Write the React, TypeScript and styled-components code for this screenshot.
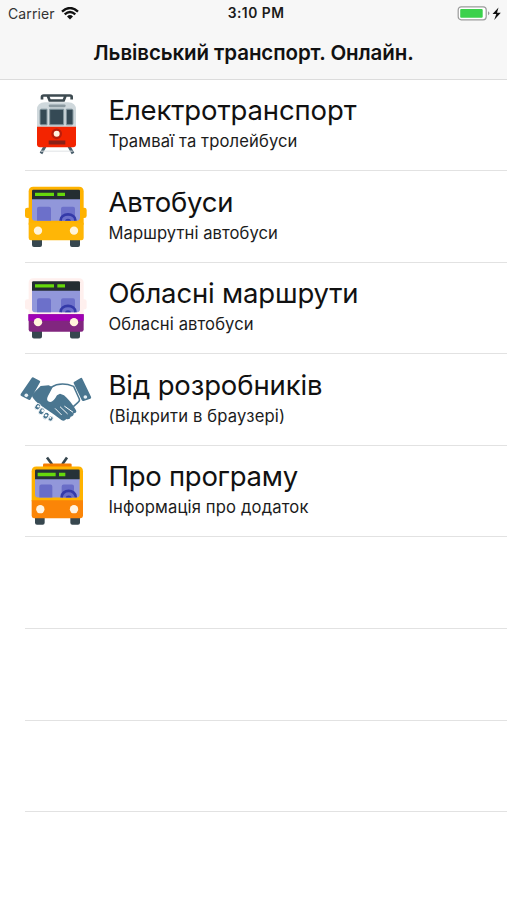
import React from "react";
import styled, { createGlobalStyle } from "styled-components";

const GlobalStyle = createGlobalStyle`
  * { box-sizing: border-box; }
  body { margin: 0; background: #fff; font-family: Inter, "Liberation Sans", sans-serif; color: #111; }
`;

const Screen = styled.main`
  width: 507px;
  height: 900px;
  overflow: hidden;
  background: #fff;
`;

const Header = styled.header`
  height: 79.5px;
  background: #f7f7f7;
  border-bottom: 1px solid #dcdcdc;
`;

const StatusBar = styled.div`
  display: grid;
  grid-template-columns: 1fr auto 1fr;
  align-items: center;
  height: 27px;
  padding: 0 5px 0 8px;
  font-size: 14px;
  line-height: 27px;
`;

const Carrier = styled.div`
  display: flex;
  align-items: center;
  gap: 6.5px;
  letter-spacing: 0.1px;
  color: #333;
`;

const Clock = styled.div`
  font-weight: 600;
  font-size: 13.8px;
  letter-spacing: 0.5px;
  color: #1a1a1a;
  padding-left: 2px;
`;

const Power = styled.div`
  display: flex;
  justify-content: flex-end;
  align-items: center;
`;

const Title = styled.h1`
  margin: 0;
  height: 51px;
  line-height: 51px;
  text-align: center;
  font-size: 20.5px;
  font-weight: 600;
  letter-spacing: -0.1px;
  white-space: nowrap;
`;

const List = styled.ul`
  margin: 0;
  padding: 0;
  list-style: none;
`;

const Row = styled.li`
  display: flex;
  height: 91.6px;
  margin-left: 25px;
  border-bottom: 1px solid #e2e2e2;
`;

const IconSlot = styled.div`
  flex: none;
  width: 84px;
  margin-left: -10px;
  margin-right: 9.5px;
  svg { display: block; overflow: visible; }
`;

const Labels = styled.div`
  padding-top: 12.6px;
  white-space: nowrap;
`;

const Name = styled.div<{ $tracking: number }>`
  font-size: 27.5px;
  line-height: 36px;
  letter-spacing: ${(p) => p.$tracking}px;
`;

const Detail = styled.div<{ $tracking: number }>`
  font-size: 16.6px;
  line-height: 26.6px;
  letter-spacing: ${(p) => p.$tracking}px;
  color: #1c1c1c;
`;

const Canvas = ({ shift, children }: { shift: number; children: React.ReactNode }) => (
  <svg width="90" height="90" viewBox={`0 ${-shift * 3} 270 270`} aria-hidden="true">
    {children}
  </svg>
);

const Tram = () => (
  <Canvas shift={5.5}>
    <path d="M81 42v-8q0-4 5-4h79q5 0 5 4v8M98 30l6 15h42l6-15" fill="none" stroke="#3d4a50" strokeWidth="8" />
    <path d="M91 181l-13 23M161 181l13 23" stroke="#4a5f6c" strokeWidth="9" />
    <path d="M78 197h95" stroke="#dfe3e5" strokeWidth="3" />
    <path d="M66 126V73q0-23 24-23h69q24 0 24 23v53z" fill="#cfd8dc" />
    <rect x="101" y="57" width="51" height="8" rx="4" fill="#8c9aa1" />
    <path d="M75 75q0-4 4-4h17v47H79q-4 0-4-4zM154 71h16q4 0 4 4v39q0 4-4 4h-16zM104 71h42v47h-42z" fill="#354a55" stroke="#8799a1" strokeWidth="3" />
    <path d="M66 124h117v52q0 9-9 9H75q-9 0-9-9z" fill="#f32400" />
    <circle cx="125" cy="145" r="16" fill="#ba1d0b" />
    <circle cx="125" cy="145" r="9" fill="#fff3e0" />
    <rect x="101" y="165" width="50" height="12" fill="#8a2118" />
  </Canvas>
);

interface BusColors { body: string; lower: string; mirror: string; stripe?: string; }

const BusShape = ({ body, lower, mirror, stripe }: BusColors) => (
  <>
    <path d="M51 190h30v20q0 6-6 6H57q-6 0-6-6zM165 190h30v20q0 6-6 6h-18q-6 0-6-6z" fill="#37474f" />
    <rect x="30" y="98" width="185" height="31" rx="7" fill={mirror} />
    <path d="M41 49q0-14 14-14h137q14 0 14 14v100H41z" fill={body} />
    <path d="M41 143h165v46q0 7-7 7H48q-7 0-7-7z" fill={lower} />
    {stripe && <path d="M40 143h166v20H40z" fill={stripe} />}
    <path d="M51 70h144v58q0 9-9 9H60q-9 0-9-9z" fill="#9197da" />
    <path d="M66 137v-36q0-6 6-6h30q6 0 6 6v36zM138 137v-36q0-6 6-6h30q6 0 6 6v36z" fill="#6c70ca" />
    <path d="M51 73V48q0-4 4-4h136q4 0 4 4v25z" fill="#242d31" />
    <path d="M60 53h57v10H60zM127 53h23v10h-23z" fill="#66d80b" />
    <path d="M137 137v-2a22 17 0 0 1 44 0v2" fill="none" stroke="#343aa9" strokeWidth="8" />
    <path d="M150 137q1-6 9-6t9 6z" fill="#343aa9" />
    <circle cx="69" cy="167" r="12.5" fill="#fff4db" />
    <circle cx="177" cy="167" r="12.5" fill="#fff4db" />
  </>
);

const CityBus = () => (
  <Canvas shift={4}><BusShape body="#ffb300" lower="#ffb606" mirror="#ffb300" /></Canvas>
);

const RegionalBus = () => (
  <Canvas shift={3.5}><BusShape body="#fff0ee" lower="#81267f" mirror="#fff0ee" stripe="#a000b5" /></Canvas>
);

const Handshake = () => (
  <Canvas shift={1}>
    <path d="M54 67l20 10q3 2 1 5l-28 50q-2 4-6 2l-22-11q-4-2-2-6l33-48q2-3 4-2zM177 81l20-12q3-2 5 2l26 54q2 4-2 6l-20 7q-4 1-6-3l-24-50q-1-3 1-4z" fill="#4a7690" />
    <path d="M77 93l24-2 12 6-14 26q-8 15 6 18 10 1 21-20l9-5 12 5q21 18 36 45 4 8-7 9 1 9-9 10-2 10-13 7-7 9-15 3l-21-16-46-31q-10-8-18-19-5-6-2-11z" fill="#4a7690" />
    <path d="M108 97q29-18 68-3l17 38q2 6-4 10l-14 13" fill="none" stroke="#4a7690" strokeWidth="4.5" />
    <path d="M121 161l18 18M136 156l21 20M149 154l24 17" fill="none" stroke="#fff" strokeWidth="3" strokeLinecap="round" />
    <g fill="#4a7690" stroke="#fff" strokeWidth="2.5">
      <ellipse cx="68" cy="155" rx="8" ry="10" transform="rotate(35 68 155)" />
      <ellipse cx="80" cy="169" rx="8" ry="11" transform="rotate(35 80 169)" />
      <ellipse cx="93" cy="182" rx="8" ry="11" transform="rotate(35 93 182)" />
      <ellipse cx="107" cy="191" rx="7" ry="8" transform="rotate(35 107 191)" />
    </g>
    <g fill="#fff">
      <circle cx="70" cy="154" r="3.5" />
      <circle cx="83" cy="167" r="4" />
      <circle cx="93" cy="181" r="3.5" />
      <circle cx="106" cy="188" r="3" />
    </g>
    <circle cx="34" cy="121" r="5.5" fill="#e7f0f5" />
    <circle cx="211" cy="126" r="5.5" fill="#e7f0f5" />
  </Canvas>
);

const Trolleybus = () => (
  <Canvas shift={2.2}>
    <path d="M96 28l15 20M156 28l-14 20" stroke="#37474f" strokeWidth="8" />
    <rect x="84" y="46" width="86" height="12" rx="4" fill="#f57c00" />
    <path d="M60 202h29v22q0 6-6 6H66q-6 0-6-6zM166 202h29v22q0 6-6 6h-17q-6 0-6-6z" fill="#37474f" />
    <path d="M50 69q0-14 14-14h126q14 0 14 14v90H50z" fill="#ffb300" />
    <path d="M50 156h154v47q0 7-7 7H57q-7 0-7-7z" fill="#fb8507" />
    <path d="M60 90h134v49q0 9-9 9H69q-9 0-9-9z" fill="#9297da" />
    <path d="M73 148v-33q0-6 6-6h27q6 0 6 6v33zM140 148v-33q0-6 6-6h25q6 0 6 6v33z" fill="#696dc7" />
    <path d="M60 93V68q0-4 4-4h126q4 0 4 4v25z" fill="#263238" />
    <path d="M68 74h54v10H68zM132 74h19v10h-19z" fill="#66d90c" />
    <path d="M140 148v-2a21 18 0 0 1 42 0v2" fill="none" stroke="#343aa9" strokeWidth="8" />
    <path d="M152 148q1-6 9-6t9 6z" fill="#343aa9" />
    <circle cx="76" cy="183" r="12.5" fill="#fff4e2" />
    <circle cx="177" cy="183" r="12.5" fill="#fff4e2" />
  </Canvas>
);

const items = [
  { icon: Tram, name: "Електротранспорт", detail: "Трамваї та тролейбуси", nt: -0.13, dt: 0.12 },
  { icon: CityBus, name: "Автобуси", detail: "Маршрутні автобуси", nt: -0.22, dt: 0.07 },
  { icon: RegionalBus, name: "Обласні маршрути", detail: "Обласні автобуси", nt: -0.17, dt: 0.1 },
  { icon: Handshake, name: "Від розробників", detail: "(Відкрити в браузері)", nt: -0.13, dt: 0.17 },
  { icon: Trolleybus, name: "Про програму", detail: "Інформація про додаток", nt: -0.27, dt: 0.15 },
];

export default function App() {
  return (
    <Screen>
      <GlobalStyle />
      <Header>
        <StatusBar>
          <Carrier>
            Carrier
            <svg width="18" height="13" viewBox="0 0 18 13" fill="none" stroke="#111">
              <path d="M1 4.7Q9-2.7 17 4.7M3.7 7.4Q9 2.7 14.3 7.4" strokeWidth="2.3" />
              <path d="M6 9.4Q9 6.8 12 9.4L9 12.4z" fill="#111" stroke="none" />
            </svg>
          </Carrier>
          <Clock>3:10 PM</Clock>
          <Power>
            <svg width="45" height="16" viewBox="0 0 45 16">
              <rect x="1.2" y="0.8" width="28" height="13" rx="3" fill="#fff" stroke="#9b9b9b" strokeWidth="1.2" />
              <rect x="3.2" y="2.9" width="22.5" height="8.8" rx="1" fill="#3bd14b" />
              <path d="M31 5.3q3 2 0 4z" fill="#999" />
              <path d="M41.5 1.5L35.5 8h3.8L37.2 14l6.6-7.3h-3.8z" fill="#111" />
            </svg>
          </Power>
        </StatusBar>
        <Title>Львівський транспорт. Онлайн.</Title>
      </Header>
      <List>
        {items.map(({ icon: Icon, name, detail, nt, dt }) => (
          <Row key={name}>
            <IconSlot><Icon /></IconSlot>
            <Labels>
              <Name $tracking={nt}>{name}</Name>
              <Detail $tracking={dt}>{detail}</Detail>
            </Labels>
          </Row>
        ))}
        <Row />
        <Row />
        <Row />
      </List>
    </Screen>
  );
}
